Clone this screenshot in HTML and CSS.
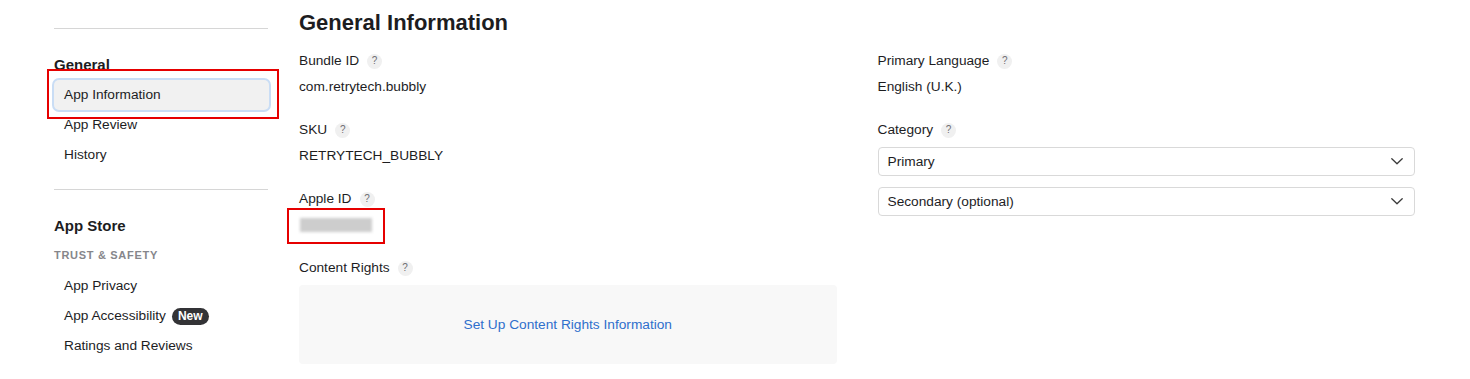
FILE: index.html
```html
<!DOCTYPE html>
<html lang="en">
<head>
<meta charset="utf-8">
<title>App Information</title>
<link rel="stylesheet" href="styles.css">
</head>
<body>
<div class="page">
  <aside class="sidebar">
    <hr class="divider">
    <h3 class="side-heading">General</h3>
    <ul class="side-list">
      <li class="side-item selected">App Information<span class="mark mark-nav"></span></li>
      <li class="side-item">App Review</li>
      <li class="side-item">History</li>
    </ul>
    <hr class="divider divider-2">
    <h3 class="side-heading">App Store</h3>
    <div class="side-sub">TRUST &amp; SAFETY</div>
    <ul class="side-list list-2">
      <li class="side-item">App Privacy</li>
      <li class="side-item">App Accessibility <span class="badge">New</span></li>
      <li class="side-item">Ratings and Reviews</li>
    </ul>
  </aside>
  <main class="main">
    <h1 class="title">General Information</h1>
    <div class="cols">
      <div class="col">
        <div class="field">
          <div class="label">Bundle ID <span class="help">?</span></div>
          <div class="value">com.retrytech.bubbly</div>
        </div>
        <div class="field">
          <div class="label">SKU <span class="help">?</span></div>
          <div class="value">RETRYTECH_BUBBLY</div>
        </div>
        <div class="field">
          <div class="label">Apple ID <span class="help">?</span></div>
          <div class="value blur-wrap"><span class="blurred"></span><span class="mark mark-id"></span></div>
        </div>
        <div class="field">
          <div class="label">Content Rights <span class="help">?</span></div>
          <div class="rights-box"><a class="link" href="#">Set Up Content Rights Information</a></div>
        </div>
      </div>
      <div class="col">
        <div class="field">
          <div class="label">Primary Language <span class="help">?</span></div>
          <div class="value">English (U.K.)</div>
        </div>
        <div class="field">
          <div class="label">Category <span class="help">?</span></div>
          <div class="select">
            <span>Primary</span>
            <svg class="chev" width="12" height="7" viewBox="0 0 12 7"><path d="M0.8 0.8 L6 5.8 L11.2 0.8" fill="none" stroke="#3a3a3a" stroke-width="1.3" stroke-linecap="round" stroke-linejoin="round"/></svg>
          </div>
          <div class="select select-2">
            <span>Secondary (optional)</span>
            <svg class="chev" width="12" height="7" viewBox="0 0 12 7"><path d="M0.8 0.8 L6 5.8 L11.2 0.8" fill="none" stroke="#3a3a3a" stroke-width="1.3" stroke-linecap="round" stroke-linejoin="round"/></svg>
          </div>
        </div>
      </div>
    </div>
  </main>
</div>
</body>
</html>
```
FILE: styles.css
```css
* { box-sizing: border-box; }
body {
  margin: 0;
  font-family: "Liberation Sans", Arial, sans-serif;
  font-size: 13.7px;
  color: #1d1d1f;
  background: #fff;
}
.page {
  display: flex;
  align-items: flex-start;
}
.sidebar {
  width: 215px;
  margin-left: 54px;
  padding-top: 28px;
}
.divider {
  border: 0;
  border-top: 1px solid #d6d6d6;
  margin: 0;
  width: 214px;
}
.divider-2 { margin-top: 19px; }
.side-heading {
  margin: 26px 0 0;
  font-size: 15px;
  line-height: 20px;
  font-weight: bold;
  color: #1d1d1f;
}
.side-list {
  list-style: none;
  margin: 5px 0 0;
  padding: 0;
}
.list-2 { margin-top: 8px; }
.side-item {
  position: relative;
  height: 30px;
  line-height: 30px;
  padding-left: 10px;
  color: #1d1d1f;
  display: flex;
  align-items: center;
}
.side-item.selected {
  background: #f1f1f1;
  border-radius: 5px;
  box-shadow: 0 0 0 2px #c9ddf5;
}
.side-sub {
  margin-top: 11px;
  font-size: 11px;
  line-height: 16px;
  font-weight: bold;
  letter-spacing: 0.7px;
  color: #86868b;
}
.badge {
  display: inline-block;
  margin-left: 6px;
  height: 17px;
  line-height: 17px;
  padding: 0 6px;
  border-radius: 9px;
  background: #333336;
  color: #fff;
  font-size: 12px;
  font-weight: bold;
}
.mark {
  position: absolute;
  border: 2px solid #e60000;
  pointer-events: none;
}
.mark-nav {
  left: -7px;
  top: -11px;
  width: 232px;
  height: 50px;
}
.main {
  margin-left: 30px;
  margin-right: 55px;
  flex: 1;
  padding-top: 9px;
}
.title {
  margin: 0;
  font-size: 22px;
  line-height: 27px;
  font-weight: bold;
  color: #1d1d1f;
}
.cols {
  display: grid;
  grid-template-columns: 1fr 1fr;
  column-gap: 41px;
  margin-top: 16px;
}
.field { margin-bottom: 25px; }
.label {
  display: flex;
  align-items: center;
  line-height: 18px;
  color: #1d1d1f;
}
.help {
  display: inline-flex;
  align-items: center;
  justify-content: center;
  width: 15px;
  height: 15px;
  margin-left: 8px;
  border-radius: 50%;
  background: #f0f0f0;
  color: #6e6e73;
  font-size: 10px;
}
.value {
  margin-top: 8px;
  line-height: 18px;
  color: #1d1d1f;
}
.blur-wrap {
  position: relative;
  height: 18px;
  display: flex;
  align-items: center;
}
.blurred {
  display: inline-block;
  width: 72px;
  height: 14px;
  margin-left: 1px;
  background: #cdcdcd;
  filter: blur(1.5px);
}
.mark-id {
  left: -12px;
  top: -8px;
  width: 98px;
  height: 36px;
}
.rights-box {
  margin-top: 8px;
  height: 79px;
  background: #f8f8f8;
  border-radius: 4px;
  display: flex;
  align-items: center;
  justify-content: center;
}
.link {
  color: #2f6fcc;
  text-decoration: none;
}
.select {
  margin-top: 8px;
  height: 29px;
  border: 1px solid #d9d9d9;
  border-radius: 4px;
  display: flex;
  align-items: center;
  justify-content: space-between;
  padding: 0 11px 0 9px;
  color: #1d1d1f;
}
.select-2 { margin-top: 11px; }
.chev { display: block; }
```
